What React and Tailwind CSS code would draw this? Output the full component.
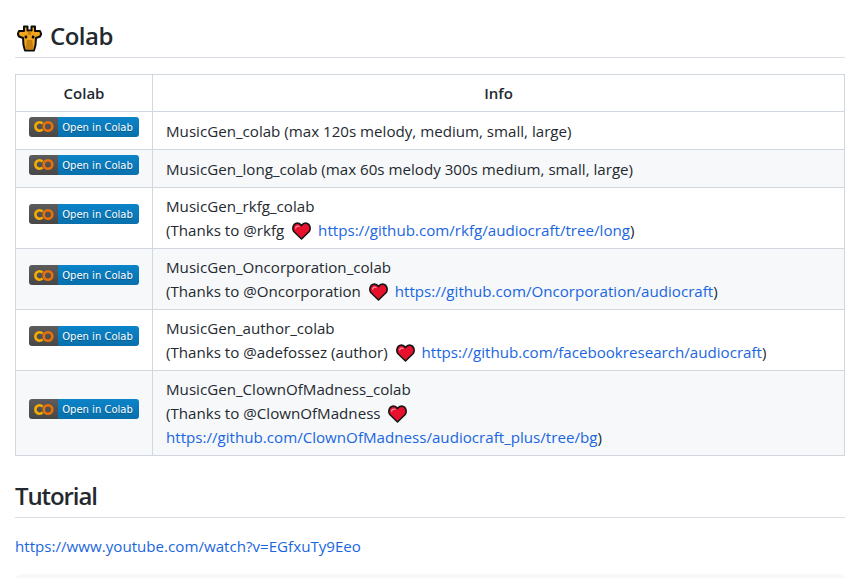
const FONT = { fontFamily: '"Open Sans", sans-serif' };

function Giraffe() {
  return (
    <svg width="25" height="27" viewBox="0 0 25 27" className="shrink-0 mb-[-1px]">
      <path d="M7 1.5 L10.5 1.5 L10.5 5.5 L14.5 5.5 L14.5 1.5 L18 1.5 L18 6 L23 6 L24.2 9 L23 11.5 L19 13 L18.5 20 L17 25.5 L8 25.5 L6.5 20 L6 13 L2 11.5 L0.8 9 L2 6 L7 6 Z" fill="#f0a51e" stroke="#0d0d0d" strokeWidth="2" strokeLinejoin="round" />
      <path d="M10 15 L15 15 L16.5 24.5 L8.5 24.5 Z" fill="#c8810f" />
      <path d="M11 6.5 L14 6.5 L14 10 L11 10 Z" fill="#c8810f" />
      <rect x="7.6" y="10.5" width="2.6" height="3" rx="1" fill="#0d0d0d" />
      <rect x="14.8" y="10.5" width="2.6" height="3" rx="1" fill="#0d0d0d" />
    </svg>
  );
}

function Heart() {
  return (
    <svg width="19" height="18" viewBox="0 0 19 18" className="ml-[4px] mr-[3px] inline-block align-[-4px]">
      <path d="M9.5 17 L1.8 9.5 C0 7 0.8 2 4.5 1.2 C6.8 0.8 8.5 2 9.5 3.6 C10.5 2 12.2 0.8 14.5 1.2 C18.2 2 19 7 17.2 9.5 Z" fill="#e8112d" stroke="#161616" strokeWidth="1.6" strokeLinejoin="round" />
      <path d="M3.6 6 C4 4.4 5.6 3.6 7 4.4" fill="none" stroke="#ff8a96" strokeWidth="1.3" strokeLinecap="round" />
    </svg>
  );
}

function Badge() {
  return (
    <span className="relative -top-[5px] inline-flex h-5 w-[110px] overflow-hidden rounded-[3px] align-middle text-[10px] leading-[22px] text-white [text-shadow:0_1px_0_rgba(1,1,1,0.3)]" style={{ fontFamily: '"DejaVu Sans", sans-serif' }}>
      <span className="flex w-[29px] items-center justify-center bg-gradient-to-b from-[#5c5c5c] to-[#474747]">
        <svg width="22" height="13" viewBox="0 0 22 13">
          <path d="M9.6 3.6 A4.2 4.2 0 1 0 9.6 9.4" fill="none" stroke="#f9ab00" strokeWidth="2.6" />
          <circle cx="15" cy="6.5" r="4.3" fill="none" stroke="#e8710a" strokeWidth="2.6" />
        </svg>
      </span>
      <span className="flex-1 bg-gradient-to-b from-[#0b84c9] to-[#0870ac] whitespace-nowrap">
        <span className="-ml-[2px] inline-block">Open in Colab</span>
      </span>
    </span>
  );
}

function A({ children }) {
  return <a className="text-[#1a66e0]" href="#">{children}</a>;
}

const ROWS = [
  { h: 'h-[38px]', lines: [<>MusicGen_colab (max 120s melody, medium, small, large)</>] },
  { h: 'h-[38px]', lines: [<>MusicGen_long_colab (max 60s melody 300s medium, small, large)</>] },
  { h: 'h-[61px]', lines: [<>MusicGen_rkfg_colab</>, <>(Thanks to @rkfg <Heart /> <A>https://github.com/rkfg/audiocraft/tree/long</A>)</>] },
  { h: 'h-[61px]', lines: [<>MusicGen_Oncorporation_colab</>, <>(Thanks to @Oncorporation <Heart /> <A>https://github.com/Oncorporation/audiocraft</A>)</>] },
  { h: 'h-[61px]', lines: [<>MusicGen_author_colab</>, <>(Thanks to @adefossez (author) <Heart /> <A>https://github.com/facebookresearch/audiocraft</A>)</>] },
  { h: 'h-[85px]', lines: [<>MusicGen_ClownOfMadness_colab</>, <>(Thanks to @ClownOfMadness <Heart /></>, <><A>https://github.com/ClownOfMadness/audiocraft_plus/tree/bg</A>)</>] },
];

export default function App() {
  return (
    <div className="h-[578px] overflow-hidden bg-white pr-[23px] pl-[15px] text-[15.13px] text-[#24292f]" style={FONT}>
      <h2 className="flex h-[58px] items-end gap-[8px] border-b border-[#d8dee4] pb-[6px] pl-[2px] text-[24px] leading-[30px] font-semibold tracking-[-0.5px]">
        <Giraffe />
        <span>Colab</span>
      </h2>

      <table className="mt-4 w-full table-fixed border-collapse">
        <thead>
          <tr className="h-[37px] text-[15px]">
            <th className="w-[137px] border border-[#d0d7de] font-semibold">Colab</th>
            <th className="border border-[#d0d7de] font-semibold">Info</th>
          </tr>
        </thead>
        <tbody>
          {ROWS.map((row, i) => (
            <tr key={i} className={`${row.h} ${i % 2 === 1 ? 'bg-[#f6f8fa]' : 'bg-white'}`}>
              <td className="border border-[#d0d7de] text-center"><Badge /></td>
              <td className="border border-[#d0d7de] px-[13px] leading-6">
                {row.lines.map((line, j) => <div key={j} className="whitespace-nowrap">{line}</div>)}
              </td>
            </tr>
          ))}
        </tbody>
      </table>

      <h2 className="mt-[25px] border-b border-[#d8dee4] pb-[6px] text-[24px] leading-[30px] font-semibold tracking-[-1.1px]">Tutorial</h2>
      <p className="mt-4 leading-6"><A>https://www.youtube.com/watch?v=EGfxuTy9Eeo</A></p>
      <div className="mt-4 h-16 rounded-md bg-[#f6f8fa]" />
    </div>
  );
}
